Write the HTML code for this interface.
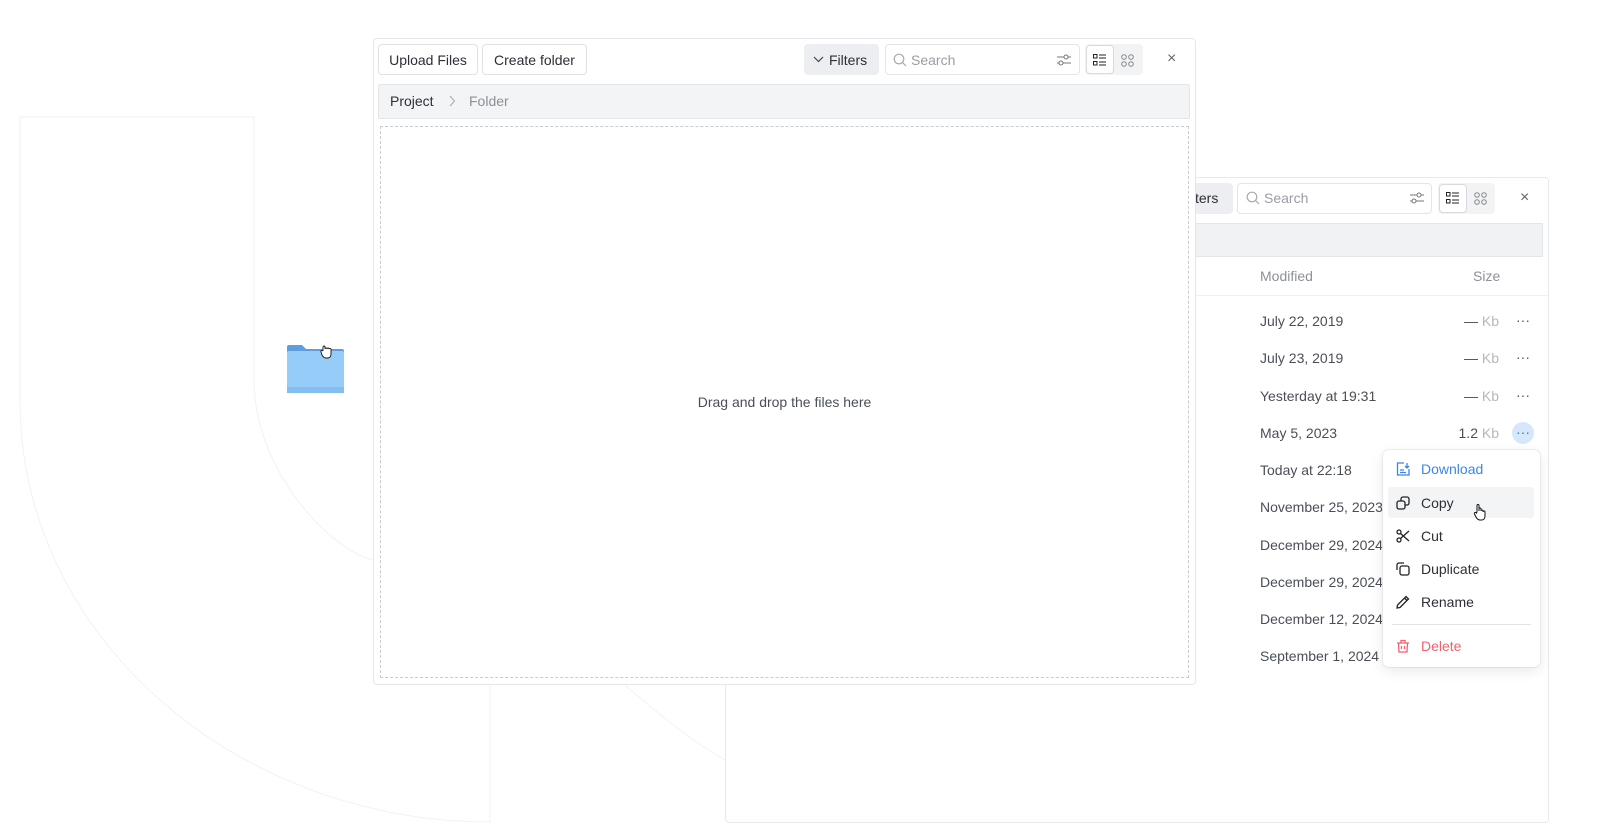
<!DOCTYPE html>
<html><head><meta charset="utf-8"><style>
*{box-sizing:border-box;margin:0;padding:0}
body{width:1600px;height:840px;background:#fff;position:relative;overflow:hidden;font-family:"Liberation Sans",sans-serif;font-size:14px;color:#2b2f36}
.a{position:absolute}
.btn{position:absolute;border:1px solid #dfe1e5;border-radius:4px;background:#fff;display:flex;align-items:center;justify-content:center;font-size:14px;color:#2b2f36}
.row{position:absolute;left:1260px;font-size:14px;color:#4a4f57;white-space:nowrap}
.sz{position:absolute;right:101px;font-size:14px;color:#4a4f57}
.sz span{color:#b5b8bd}
.dots{position:absolute;left:1516px;width:14px;font-size:14px;color:#555;letter-spacing:0}
.mi{position:absolute;left:1421px;font-size:14px;color:#2b2f36}
.ic{position:absolute;left:1396px}
</style></head><body>
<svg class="a" style="left:0;top:0" width="1600" height="840">
<path d="M20 117 H254 V380 C254 470 330 550 373 560" fill="none" stroke="#f2f2f2"/>
<path d="M20 117 V400 C20 640 240 822 490 822 V685" fill="none" stroke="#f2f2f2"/>
<path d="M625 685 C660 715 690 740 725 760" fill="none" stroke="#f2f2f2"/>
</svg>
<!-- back window -->
<div class="a" style="left:725px;top:177px;width:824px;height:646px;border:1px solid #e8e9eb;border-radius:4px;background:#fff"></div>
<div class="a" style="left:1160px;top:183px;width:73px;height:31px;background:#eceef1;border-radius:4px"></div>
<div class="a" style="left:1195px;top:190px;font-size:14px;color:#2b2f36">ters</div>
<div class="a" style="left:1237px;top:183px;width:195px;height:31px;border:1px solid #e3e5e8;border-radius:4px"></div>
<svg class="a" style="left:1246px;top:191px" width="14" height="14"><circle cx="6" cy="6" r="4.8" fill="none" stroke="#aaa" stroke-width="1.2"/><path d="M9.5 9.5L13 13" stroke="#aaa" stroke-width="1.2"/></svg>
<div class="a" style="left:1264px;top:190px;color:#9a9ea5">Search</div>
<svg class="a" style="left:1409px;top:191px" width="16" height="14"><path d="M1 4H15M1 10H15" stroke="#777" stroke-width="1"/><circle cx="10" cy="4" r="2" fill="#fff" stroke="#777"/><circle cx="5" cy="10" r="2" fill="#fff" stroke="#777"/></svg>
<div class="a" style="left:1438px;top:183px;width:57px;height:31px;background:#f2f3f5;border-radius:4px"></div>
<div class="a" style="left:1439px;top:184px;width:28px;height:29px;background:#fff;border:1px solid #d8dadf;border-radius:4px"></div>
<svg class="a" style="left:1446px;top:192px" width="14" height="12"><rect x="0.5" y="0.5" width="3.5" height="3.5" fill="none" stroke="#222"/><rect x="0.5" y="7.5" width="3.5" height="3.5" fill="none" stroke="#222"/><path d="M6 1H13M6 4H13M6 8H13M6 11H13" stroke="#222"/></svg>
<svg class="a" style="left:1474px;top:192px" width="13" height="13"><circle cx="3" cy="3" r="2.3" fill="none" stroke="#888"/><circle cx="10" cy="3" r="2.3" fill="none" stroke="#888"/><circle cx="3" cy="10" r="2.3" fill="none" stroke="#888"/><circle cx="10" cy="10" r="2.3" fill="none" stroke="#888"/></svg>
<div class="a" style="left:1520px;top:189px;font-size:16px;color:#666">×</div>
<div class="a" style="left:1195px;top:223px;width:348px;height:34px;background:#f1f2f4;border:1px solid #e3e5e8;border-left:none"></div>
<div class="a" style="left:1260px;top:268px;color:#8c9097">Modified</div>
<div class="a" style="left:1473px;top:268px;color:#8c9097">Size</div>
<div class="a" style="left:1195px;top:295px;width:353px;height:1px;background:#eef0f2"></div>
<div class="row" style="top:313px">July 22, 2019</div>
<div class="row" style="top:350px">July 23, 2019</div>
<div class="row" style="top:388px">Yesterday at 19:31</div>
<div class="row" style="top:425px">May 5, 2023</div>
<div class="row" style="top:462px">Today at 22:18</div>
<div class="row" style="top:499px">November 25, 2023</div>
<div class="row" style="top:537px">December 29, 2024</div>
<div class="row" style="top:574px">December 29, 2024</div>
<div class="row" style="top:611px">December 12, 2024</div>
<div class="row" style="top:648px">September 1, 2024</div>
<div class="sz" style="top:313px">— <span>Kb</span></div>
<div class="sz" style="top:350px">— <span>Kb</span></div>
<div class="sz" style="top:388px">— <span>Kb</span></div>
<div class="sz" style="top:425px">1.2 <span>Kb</span></div>
<div class="dots" style="top:312px">···</div>
<div class="dots" style="top:349px">···</div>
<div class="dots" style="top:387px">···</div>
<div class="a" style="left:1512px;top:422px;width:22px;height:22px;border-radius:50%;background:#d6e6fb"></div>
<div class="dots" style="top:424px;color:#2a7be4">···</div>
<!-- menu -->
<div class="a" style="left:1383px;top:450px;width:157px;height:217px;background:#fff;border-radius:6px;box-shadow:0 4px 14px rgba(0,0,0,0.09),0 0 0 1px #f0f0f0"></div>
<div class="a" style="left:1388px;top:487px;width:146px;height:31px;background:#f3f4f6;border-radius:3px"></div>
<div class="mi" style="top:461px;color:#3b87e8">Download</div>
<div class="mi" style="top:495px">Copy</div>
<div class="mi" style="top:528px">Cut</div>
<div class="mi" style="top:561px">Duplicate</div>
<div class="mi" style="top:594px">Rename</div>
<div class="a" style="left:1392px;top:624px;width:139px;height:1px;background:#e2e3e6"></div>
<div class="mi" style="top:638px;color:#f0616f">Delete</div>
<svg class="ic" style="top:462px" width="14" height="14" fill="none" stroke="#3b87e8" stroke-width="1.3"><path d="M8 1H1.5V13H13V7"/><path d="M11 1V6M9 4L11 6L13 4M4 8H8M4 10.5H10"/></svg>
<svg class="ic" style="top:496px" width="14" height="14" fill="none" stroke="#222" stroke-width="1.3"><rect x="1" y="5" width="8" height="8" rx="2"/><path d="M5 5V3A2 2 0 0 1 7 1H11A2 2 0 0 1 13 3V7A2 2 0 0 1 11 9H9"/></svg>
<svg class="ic" style="top:529px" width="14" height="14" fill="none" stroke="#222" stroke-width="1.3"><circle cx="3" cy="3" r="2"/><circle cx="3" cy="11" r="2"/><path d="M4.5 4.5L13 12M4.5 9.5L13 2"/></svg>
<svg class="ic" style="top:562px" width="14" height="14" fill="none" stroke="#222" stroke-width="1.3"><path d="M1 8V3A2 2 0 0 1 3 1H8"/><rect x="4" y="4" width="9" height="9" rx="2"/></svg>
<svg class="ic" style="top:595px" width="14" height="14" fill="none" stroke="#222" stroke-width="1.3"><path d="M1 13L1.5 10L10 1.5L12.5 4L4 12.5Z M8.5 3L11 5.5"/></svg>
<svg class="ic" style="top:639px" width="14" height="14" fill="none" stroke="#f0616f" stroke-width="1.3"><path d="M1 4H13M5 4V1.5H9V4M2.5 4L3 13H11L11.5 4M5.5 7V10M8.5 7V10"/></svg>
<!-- cursor -->
<svg class="a" style="left:1473px;top:503px" width="16" height="18"><path d="M4 9V2.5A1 1 0 0 1 6 2.5V8V6A1 1 0 0 1 8 6V8A1 1 0 0 1 10 8V9A1 1 0 0 1 12 9V13C12 15 11 17 9 17H7C5 17 4 16 3 14L1.5 11A1 1 0 0 1 3.5 10Z" fill="#fff" stroke="#111" stroke-width="1"/></svg>
<!-- main window -->
<div class="a" style="left:373px;top:38px;width:823px;height:647px;border:1px solid #e4e6e9;border-radius:4px;background:#fff"></div>
<div class="btn" style="left:378px;top:44px;width:100px;height:31px">Upload Files</div>
<div class="btn" style="left:482px;top:44px;width:105px;height:31px">Create folder</div>
<div class="a" style="left:804px;top:44px;width:75px;height:31px;background:#eceef1;border-radius:4px"></div>
<svg class="a" style="left:813px;top:56px" width="11" height="7"><path d="M1 1L5.5 5.5L10 1" fill="none" stroke="#444" stroke-width="1.2"/></svg>
<div class="a" style="left:829px;top:52px">Filters</div>
<div class="a" style="left:885px;top:44px;width:195px;height:31px;border:1px solid #e3e5e8;border-radius:4px"></div>
<svg class="a" style="left:893px;top:53px" width="14" height="14"><circle cx="6" cy="6" r="4.8" fill="none" stroke="#aaa" stroke-width="1.2"/><path d="M9.5 9.5L13 13" stroke="#aaa" stroke-width="1.2"/></svg>
<div class="a" style="left:911px;top:52px;color:#9a9ea5">Search</div>
<svg class="a" style="left:1056px;top:53px" width="16" height="14"><path d="M1 4H15M1 10H15" stroke="#777" stroke-width="1"/><circle cx="10" cy="4" r="2" fill="#fff" stroke="#777"/><circle cx="5" cy="10" r="2" fill="#fff" stroke="#777"/></svg>
<div class="a" style="left:1085px;top:44px;width:58px;height:31px;background:#f2f3f5;border-radius:4px"></div>
<div class="a" style="left:1086px;top:45px;width:28px;height:29px;background:#fff;border:1px solid #d8dadf;border-radius:4px"></div>
<svg class="a" style="left:1093px;top:54px" width="14" height="12"><rect x="0.5" y="0.5" width="3.5" height="3.5" fill="none" stroke="#222"/><rect x="0.5" y="7.5" width="3.5" height="3.5" fill="none" stroke="#222"/><path d="M6 1H13M6 4H13M6 8H13M6 11H13" stroke="#222"/></svg>
<svg class="a" style="left:1121px;top:54px" width="13" height="13"><circle cx="3" cy="3" r="2.3" fill="none" stroke="#888"/><circle cx="10" cy="3" r="2.3" fill="none" stroke="#888"/><circle cx="3" cy="10" r="2.3" fill="none" stroke="#888"/><circle cx="10" cy="10" r="2.3" fill="none" stroke="#888"/></svg>
<div class="a" style="left:1167px;top:50px;font-size:16px;color:#666">×</div>
<div class="a" style="left:378px;top:84px;width:812px;height:35px;background:#f3f4f6;border:1px solid #e3e5e8;border-radius:2px"></div>
<div class="a" style="left:390px;top:93px">Project</div>
<svg class="a" style="left:448px;top:95px" width="8" height="12"><path d="M2 1L6.5 6L2 11" fill="none" stroke="#aaa" stroke-width="1.1"/></svg>
<div class="a" style="left:469px;top:93px;color:#8c9097">Folder</div>
<div class="a" style="left:380px;top:126px;width:809px;height:552px;border:1px dashed #c9cbd0"></div>
<div class="a" style="left:380px;top:394px;width:809px;text-align:center;color:#4a4f57">Drag and drop the files here</div>
<!-- folder -->
<svg class="a" style="left:286px;top:343px" width="60" height="52"><path d="M1 4A2 2 0 0 1 3 2H16L20 6H56A2 2 0 0 1 58 8V14H1Z" fill="#5d9ee0"/><rect x="1" y="8" width="57" height="42" rx="2" fill="#96cdf8"/><rect x="1" y="44" width="57" height="6" fill="#84bdef"/></svg>
<svg class="a" style="left:320px;top:344px" width="14" height="15"><path d="M3 6V3A1 1 0 0 1 5 3V5A1 1 0 0 1 7 5V5A1 1 0 0 1 9 5A1 1 0 0 1 11 6V10C11 12 10 14 8 14H6C4 14 3 13 2 11L1 8A1 1 0 0 1 3 7Z" fill="#fff" stroke="#111" stroke-width="0.9"/></svg>
</body></html>
